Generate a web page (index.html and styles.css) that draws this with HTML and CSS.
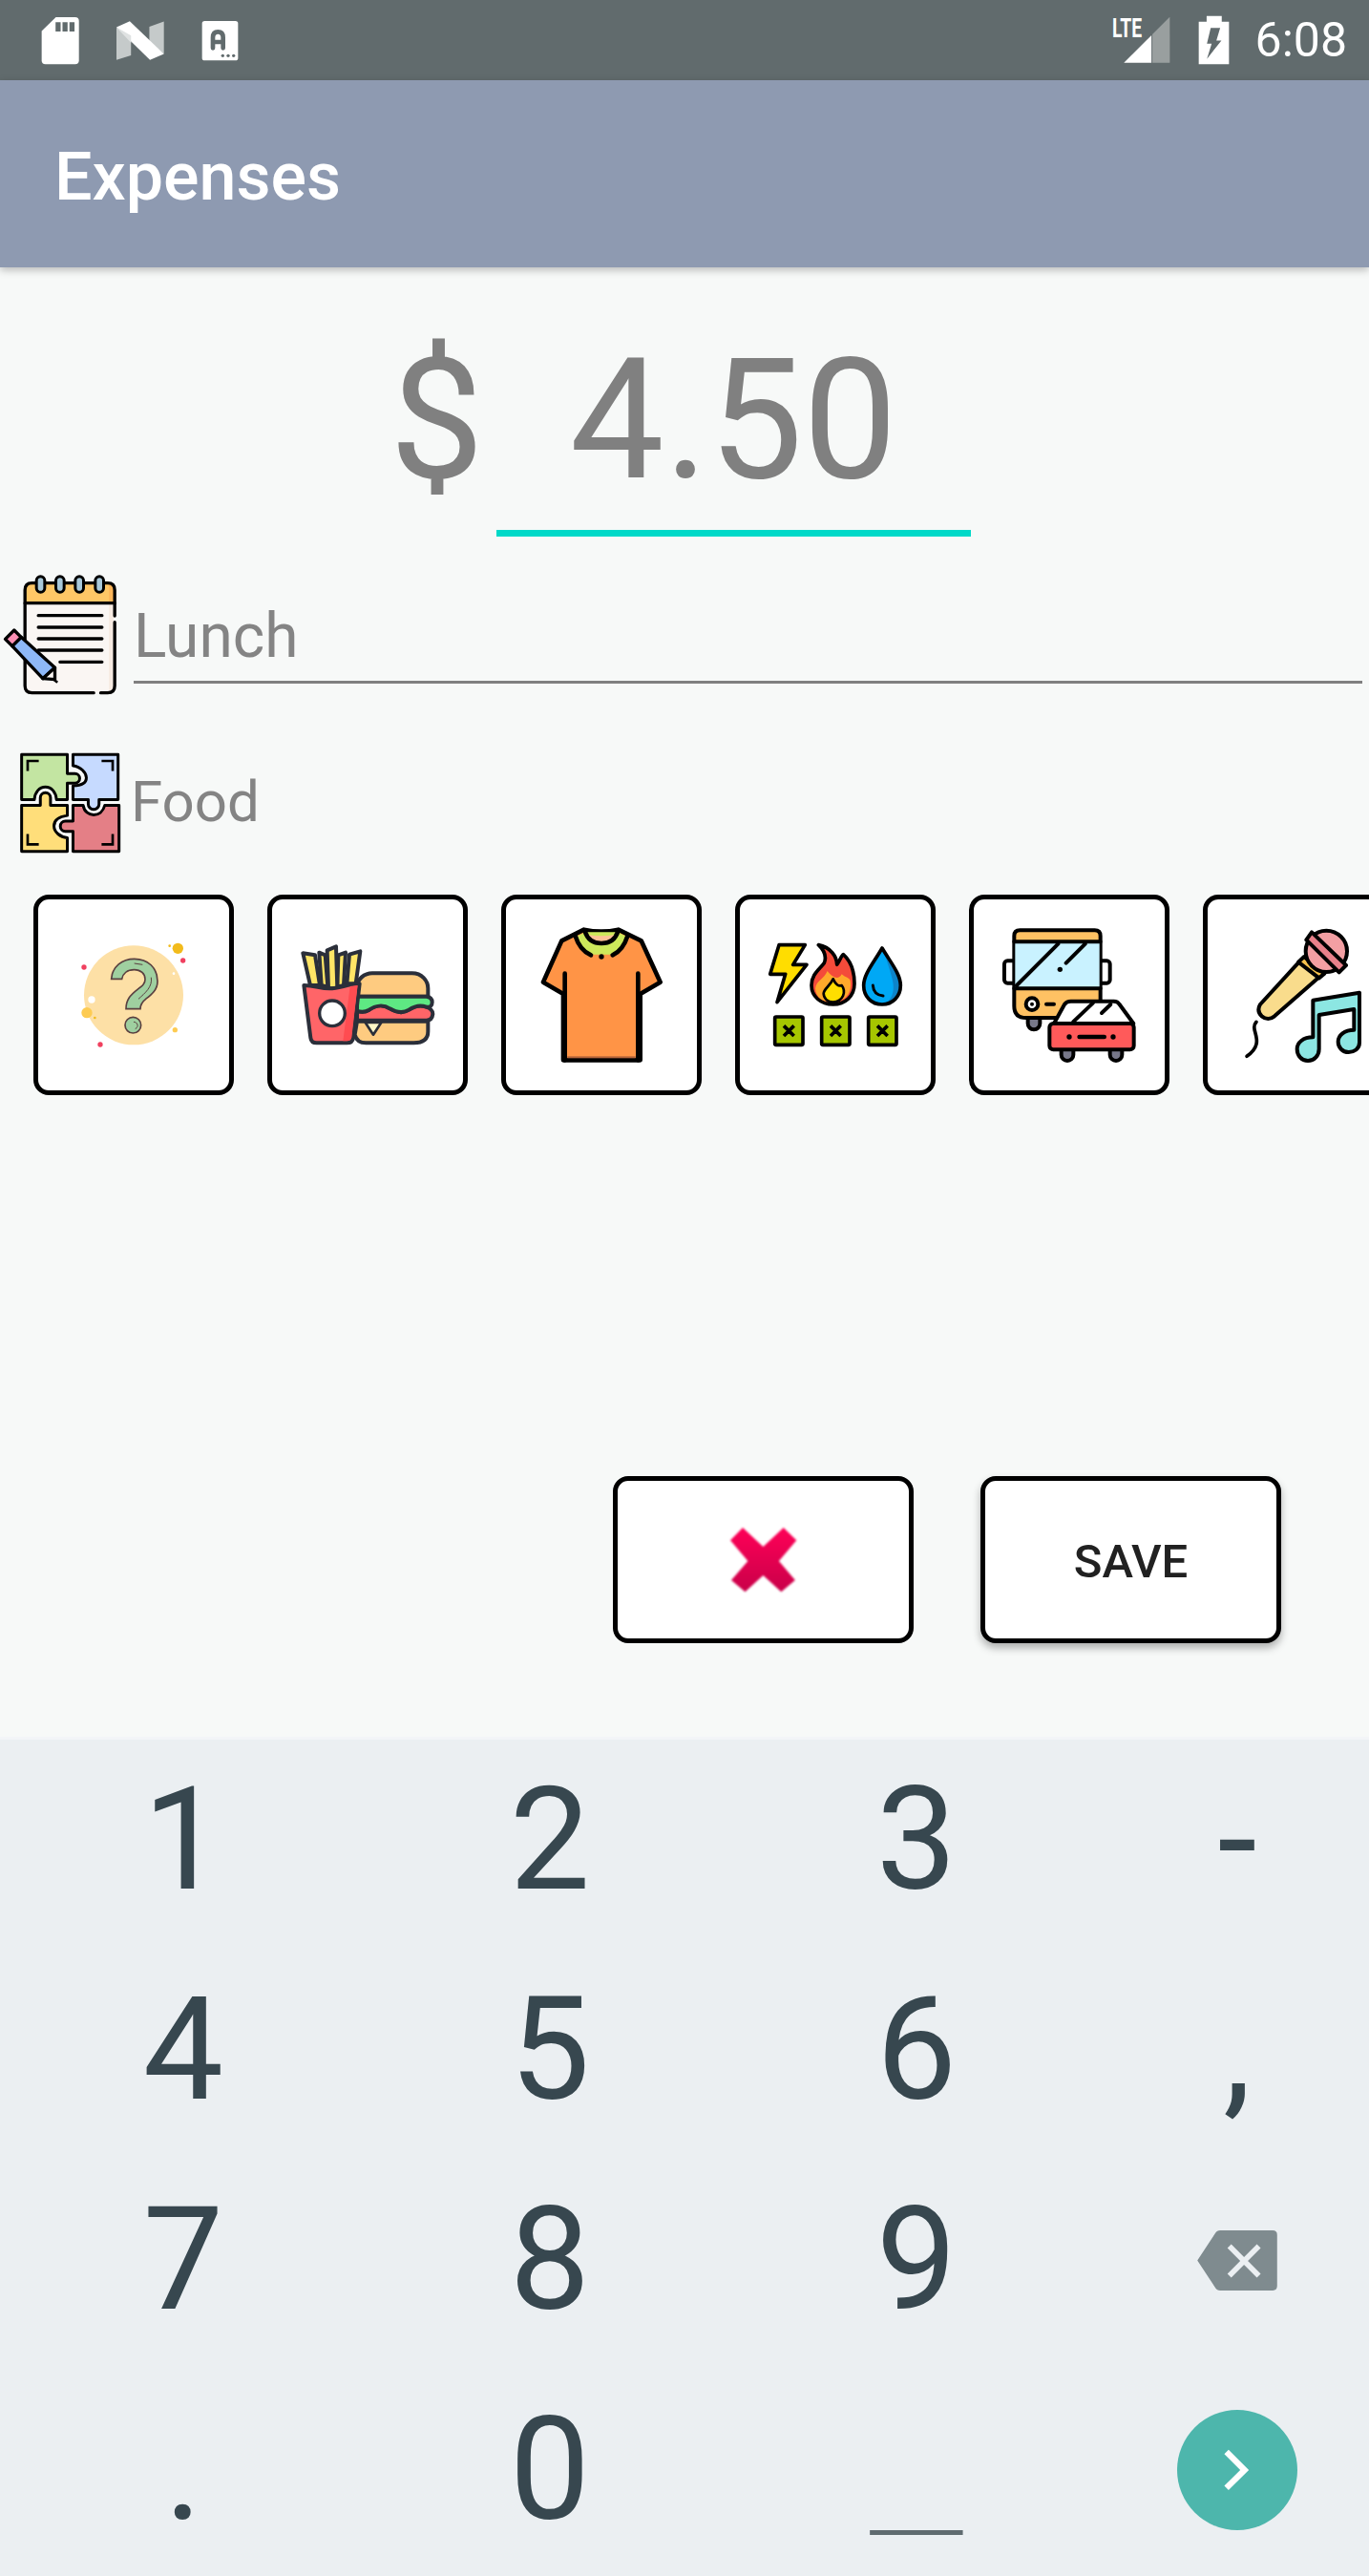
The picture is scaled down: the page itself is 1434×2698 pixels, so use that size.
FILE: index.html
```html
<!DOCTYPE html>
<html>
<head>
    <title>Expenses</title>
    <link rel="stylesheet" href="styles.css">
</head>
<body>
<div class="page">
    <div class="status-bar">
        <svg class="ic-sd" viewBox="125 45 130 160"><path fill="#fff" d="M175 51 H236 Q248 51 248 63 V188 Q248 200 236 200 H142 Q130 200 130 188 V95 Z"/><path fill="#616b6d" d="M174 67 h16 v29 h-16z M196 67 h16 v29 h-16z M218 67 h16 v29 h-16z"/></svg>
        <svg class="ic-n" viewBox="360 58 160 135"><path fill="#c5caca" d="M366 85 L412 110 V172 L366 187 Z M470 82 L516 65 V168 L470 130 Z"/><path fill="#fff" d="M366 83 L408 64 L516 168 L472 187 Z"/><path fill="#dfe2e2" d="M366 83 L412 132 V110 Z"/></svg>
        <svg class="ic-a" viewBox="632 58 123 135"><rect x="637" y="64" width="113" height="124" rx="8" fill="#fff"/><path fill="none" stroke="#616b6d" stroke-width="14" stroke-linecap="round" stroke-linejoin="round" d="M671 149 V116 Q671 98 687 98 Q703 98 703 116 V149 M671 130 H703"/><circle cx="702" cy="173" r="5" fill="#616b6d"/><circle cx="719" cy="173" r="5" fill="#616b6d"/><circle cx="736" cy="173" r="5" fill="#616b6d"/></svg>
        <div class="status-right">
            <svg class="ic-signal" viewBox="195 35 190 165"><text x="198" y="115" textLength="94" lengthAdjust="spacingAndGlyphs" class="lte-text">LTE</text><path fill="#fff" d="M235 197 L322 110 V197 Z"/><path fill="#999f9f" d="M325 107 L380 52 V197 H325 Z"/></svg>
            <svg class="ic-battery" viewBox="470 45 100 157"><path fill="#fff" d="M497 47 H545 V65 H568 V200 H472 V65 H497 Z"/><path fill="#616b6d" d="M510 85 H540 L528 125 H544 L498 183 L513 135 H498 Z"/></svg>
            <span class="clock">6:08</span>
        </div>
    </div>
    <div class="app-bar">Expenses</div>

    <div class="content">
        <div class="amount-row">
            <span class="currency">$</span>
            <div class="amount-field">4.50</div>
        </div>

        <div class="note-row">
            <svg class="ic-note" viewBox="0 60 380 390">
                <rect x="78" y="92" width="282" height="345" rx="22" fill="#faf6f3"/>
                <rect x="342" y="156" width="14" height="274" fill="#f7ebe2"/>
                <path fill="#ffc766" d="M78 155 V114 Q78 92 100 92 H338 Q360 92 360 114 V155 Z"/>
                <path fill="#fdb65a" d="M342 92 H338 Q360 92 360 114 V155 H342 Z"/>
                <g fill="none" stroke="#000" stroke-width="10" stroke-linecap="round" stroke-linejoin="round">
                    <path d="M360 215 V415 Q360 437 338 437 H316 M294 437 H100 Q78 437 78 415 V114 Q78 92 100 92 H338 Q360 92 360 114 V195"/>
                    <path d="M78 155 H360"/>
                    <path d="M120 194 H320 M120 231 H320 M120 267 H320 M120 303 H320 M188 340 H320"/>
                </g>
                <g fill="#a9c9da" stroke="#000" stroke-width="9">
                    <rect x="114" y="71" width="26" height="50" rx="13"/>
                    <rect x="175" y="71" width="26" height="50" rx="13"/>
                    <rect x="236" y="71" width="26" height="50" rx="13"/>
                    <rect x="299" y="71" width="26" height="50" rx="13"/>
                </g>
                <g stroke="#000" stroke-width="10" stroke-linejoin="round">
                    <path fill="#8eb8f7" d="M38 290 L66 262 L172 358 L134 392 Z"/>
                    <path fill="#fb8fb4" d="M16 268 L44 240 L66 262 L38 290 Z"/>
                    <path fill="#faf6f3" d="M172 358 L172 395 L134 392 Z"/>
                </g>
                <path stroke="#000" stroke-width="8" d="M165 392 L180 404"/>
            </svg>
            <div class="note-field">Lunch</div>
        </div>

        <div class="category-row">
            <svg class="ic-puzzle" viewBox="60 620 325 325">
                <g stroke="#000" stroke-width="9" stroke-linejoin="round">
                    <path fill="#c3e5a2" d="M68 630 H212 V690 H236 a15 15 0 0 1 0 30 H212 V772 H178 C176 748 162 732 143 732 C124 732 110 748 108 772 H68 Z"/>
                    <path fill="#c6daff" d="M230 630 H372 V772 H312 V786 a16 16 0 0 1 -34 0 V772 H230 V728 C255 728 272 720 272 703 C272 688 255 668 230 665 Z"/>
                    <path fill="#ffde7a" d="M68 790 H127 V766 a16 16 0 0 1 32 0 V790 H212 V822 C190 825 170 835 170 855 C170 875 190 890 212 892 V935 H68 Z"/>
                    <path fill="#e47f86" d="M230 790 H262 C265 810 280 820 295 820 C310 820 325 810 330 790 H375 V935 H230 V872 H206 a16 16 0 0 1 0 -32 H230 Z"/>
                </g>
                <g fill="none" stroke="#000" stroke-width="8">
                    <path d="M87 682 V650 H122 M320 650 H355 V682 M87 880 V913 H122 M355 880 V913 H320"/>
                </g>
            </svg>
            <div class="category-name">Food</div>
        </div>

        <div class="tiles">
            <div class="tile">
                <svg viewBox="60 65 600 600">
                    <circle cx="360" cy="366" r="156" fill="#fde0a6"/>
                    <g fill="#9fd0a0" stroke="#5a4040" stroke-width="5">
                        <path d="M290 315 C292 275 325 252 362 252 C405 252 435 280 435 322 C435 350 415 365 398 378 C385 388 381 395 381 409 L336 409 C336 380 350 365 372 348 C388 336 396 330 396 316 C396 298 382 286 362 286 C340 286 326 298 323 315 Z"/>
                        <circle cx="358" cy="460" r="25"/>
                    </g>
                    <path fill="none" stroke="#5a4040" stroke-width="3" d="M362 266 L388 270 M415 310 C420 340 395 360 375 378 M360 450 C372 450 378 465 365 472"/>
                    <circle cx="499" cy="219" r="17" fill="#f2bb1c"/><circle cx="473" cy="211" r="4" fill="#f2bb1c"/>
                    <circle cx="515" cy="257" r="8" fill="#f0405f"/><circle cx="204" cy="278" r="8" fill="#f0405f"/>
                    <circle cx="228" cy="380" r="11" fill="#fff"/><circle cx="486" cy="298" r="4" fill="#fff"/>
                    <circle cx="213" cy="421" r="17" fill="#fdcb52"/><circle cx="238" cy="437" r="4" fill="#f2bb1c"/>
                    <circle cx="490" cy="475" r="8" fill="#fdcb52"/><circle cx="255" cy="521" r="8" fill="#f0405f"/>
                </svg>
            </div>
            <div class="tile">
                <svg viewBox="795 65 600 600">
                    <g stroke="#2b2f3a" stroke-width="12" stroke-linejoin="round">
                        <path fill="#fecb80" d="M1062 370 V340 C1062 315 1085 297 1110 297 H1235 C1265 297 1285 320 1285 345 V370 Z"/>
                        <path fill="#fecb80" d="M1062 448 H1285 V480 Q1285 516 1240 516 H1090 Q1062 516 1055 490 Z"/>
                        <path fill="#fff8c8" stroke-width="8" d="M1088 452 H1138 L1113 490 Z"/>
                        <path fill="#ff6568" d="M1062 415 C1075 420 1090 418 1100 412 C1120 398 1145 395 1165 408 C1185 420 1205 425 1225 412 C1245 398 1260 395 1280 403 Q1300 410 1300 425 Q1298 445 1280 445 H1062 Z"/>
                        <path fill="#5ee883" d="M1062 370 H1280 Q1298 372 1298 388 Q1298 405 1280 403 C1260 395 1245 398 1225 412 C1205 425 1185 420 1165 408 C1145 395 1120 398 1100 412 C1090 418 1075 420 1062 415 Z"/>
                        <g fill="#ffe566">
                            <path d="M892 234 L930 240 L945 335 L915 335 Z"/>
                            <path d="M943 232 L962 240 L970 340 L950 335 Z"/>
                            <path d="M1003 240 L1026 232 L1020 335 L1000 340 Z"/>
                            <path d="M1038 238 L1072 228 L1058 330 L1030 330 Z"/>
                            <path d="M968 225 L996 213 L1000 345 L972 345 Z"/>
                        </g>
                        <path fill="#ff6568" d="M895 335 C930 335 945 345 975 345 C1010 345 1030 330 1070 330 L1050 500 Q1048 516 1030 516 H935 Q918 516 916 500 Z"/>
                    </g>
                    <path fill="#ff4c51" d="M1040 338 L1064 335 L1045 498 Q1043 510 1030 510 H1018 Z"/>
                    <circle cx="984" cy="423" r="40" fill="#fff" stroke="#2b2f3a" stroke-width="10"/>
                </svg>
            </div>
            <div class="tile">
                <svg viewBox="90 65 600 600">
                    <path fill="#ff9446" stroke="#000" stroke-width="14" stroke-linejoin="round" d="M335 160 Q390 172 443 160 L515 195 L575 325 L512 362 V570 H270 V362 L207 325 L265 195 Z"/>
                    <path fill="#cde95b" d="M315 180 L340 168 L440 168 L465 180 Q455 222 425 238 L355 238 Q325 222 315 180 Z"/>
                    <path fill="#ffc296" d="M344 175 Q390 185 436 175 Q430 205 390 207 Q350 205 344 175 Z"/>
                    <rect x="283" y="558" width="214" height="6" fill="#b4633a"/>
                    <g fill="none" stroke="#000" stroke-width="14" stroke-linecap="round">
                        <path d="M308 180 Q322 225 357 240 M472 180 Q458 225 425 240"/>
                        <path d="M338 165 Q350 203 390 203 Q430 203 442 165"/>
                        <path d="M275 298 V570 M505 298 V570"/>
                    </g>
                    <circle cx="390" cy="245" r="8" fill="#000"/>
                </svg>
            </div>
            <div class="tile">
                <svg viewBox="825 65 600 600">
                    <g stroke="#000" stroke-width="11" stroke-linejoin="round">
                        <path fill="#ffdd00" d="M948 208 H1030 L992 270 H1035 L942 388 L968 300 H920 Z"/>
                        <path fill="#f44b3a" d="M1072 208 C1110 215 1130 245 1130 270 C1140 255 1145 240 1150 238 C1175 260 1185 290 1185 330 C1185 370 1155 395 1118 395 C1080 395 1050 370 1050 335 C1050 300 1075 285 1090 265 C1098 245 1090 225 1072 208 Z"/>
                    </g>
                    <path fill="#ffa92b" d="M1062 345 C1065 320 1090 315 1100 290 C1115 310 1135 320 1145 300 C1155 310 1168 310 1172 320 C1178 355 1160 385 1118 388 C1085 388 1065 375 1062 345 Z"/>
                    <path fill="#ffde00" stroke="#000" stroke-width="8" stroke-linejoin="round" d="M1088 360 C1090 345 1110 335 1118 315 C1125 330 1135 340 1145 335 C1160 355 1150 385 1118 388 C1100 388 1088 375 1088 360 Z"/>
                    <path fill="#00a8f5" d="M1272 218 C1300 265 1330 300 1330 335 C1330 370 1305 395 1272 395 C1238 395 1214 370 1214 335 C1214 300 1245 265 1272 218 Z"/>
                    <path fill="#0d84c9" d="M1272 218 C1300 265 1330 300 1330 335 C1330 370 1305 395 1272 395 C1305 385 1312 350 1305 320 C1298 290 1285 250 1272 218 Z"/>
                    <path fill="none" stroke="#000" stroke-width="11" stroke-linejoin="round" d="M1272 218 C1300 265 1330 300 1330 335 C1330 370 1305 395 1272 395 C1238 395 1214 370 1214 335 C1214 300 1245 265 1272 218 Z"/>
                    <path fill="none" stroke="#000" stroke-width="9" stroke-linecap="round" d="M1243 335 Q1245 365 1275 368"/>
                    <g fill="#a6c600" stroke="#000" stroke-width="11" stroke-linejoin="round">
                        <rect x="935" y="434" width="88" height="88" rx="4"/>
                        <rect x="1082" y="434" width="88" height="88" rx="4"/>
                        <rect x="1229" y="434" width="88" height="88" rx="4"/>
                    </g>
                    <path fill="none" stroke="#000" stroke-width="11" d="M963 462 L995 494 M995 462 L963 494 M1110 462 L1142 494 M1142 462 L1110 494 M1257 462 L1289 494 M1289 462 L1257 494"/>
                </svg>
            </div>
            <div class="tile">
                <svg viewBox="120 65 600 600">
                    <g stroke="#000" stroke-width="12" stroke-linejoin="round" stroke-linecap="round">
                        <path fill="#77788a" d="M290 436 V455 a19 19 0 0 0 38 0 V436 Z"/>
                        <rect x="216" y="258" width="40" height="70" rx="10" fill="#fff"/>
                        <rect x="508" y="258" width="40" height="70" rx="10" fill="#fff"/>
                        <path fill="#fec163" d="M247 180 Q247 162 265 162 H500 Q518 162 518 180 V400 Q518 437 480 437 H285 Q247 437 247 400 Z"/>
                        <rect x="250" y="199" width="265" height="146" fill="#c9f2ff" stroke="none"/>
                        <path fill="none" d="M247 198 H518 M247 345 H518 M255 335 L385 205 M410 265 L470 205"/>
                        <path fill="none" d="M348 394 H372"/>
                        <circle cx="303" cy="394" r="19" fill="#fff"/>
                        <path fill="#77788a" d="M395 535 V553 a19 19 0 0 0 38 0 V535 Z M548 535 V553 a19 19 0 0 0 38 0 V535 Z"/>
                        <path fill="#fff" d="M372 455 L405 395 Q412 385 425 385 H560 Q572 385 578 395 L622 455 Z"/>
                        <path fill="none" d="M432 450 L495 390 M522 422 L550 395"/>
                        <rect x="358" y="455" width="265" height="82" rx="12" fill="#ff5a5a"/>
                        <path fill="none" stroke-width="14" d="M452 497 H530"/>
                    </g>
                    <circle cx="391" cy="285" r="8" fill="#000"/>
                    <circle cx="303" cy="394" r="6" fill="#000"/>
                    <circle cx="420" cy="497" r="8" fill="#000"/>
                    <circle cx="558" cy="497" r="8" fill="#000"/>
                </svg>
            </div>
            <div class="tile">
                <svg viewBox="855 65 600 600">
                    <g stroke="#000" stroke-width="12" stroke-linejoin="round" stroke-linecap="round">
                        <path fill="#f9dc8c" d="M1142 262 L1020 395 Q1008 415 1025 432 Q1045 448 1065 432 L1210 305 Z"/>
                        <path fill="#f6c24d" d="M1140 262 L1158 245 L1222 298 L1205 312 Z"/>
                        <circle cx="1228" cy="228" r="65" fill="#f39fa3"/>
                        <path fill="#e8808a" d="M1182 168 L1290 272 L1268 294 L1165 192 Z"/>
                        <path fill="none" stroke-width="11" d="M1008 450 C990 470 1015 490 1008 520 C1003 540 990 550 978 558"/>
                        <path fill="#8ce6e2" d="M1186 382 L1332 358 V515 C1332 535 1315 545 1298 545 C1278 545 1265 530 1265 512 C1265 492 1285 475 1315 475 V410 L1205 428 V535 C1205 555 1190 572 1170 572 C1150 572 1136 555 1136 535 C1136 515 1155 498 1186 498 Z"/>
                    </g>
                </svg>
            </div>
        </div>

        <div class="actions">
            <div class="btn">
                <svg class="ic-cancel" viewBox="0 0 70 68">
                    <defs><linearGradient id="xgrad" x1="0" y1="0" x2="0" y2="1"><stop offset="0" stop-color="#ff0057"/><stop offset="1" stop-color="#c90049"/></linearGradient></defs>
                    <path fill="url(#xgrad)" d="M13 0 L34.4 20 L55.7 0 L69.3 13.3 L50.9 35 L67.9 55 L53.3 67.3 L34.4 50 L15.5 67.3 L1 55 L18.4 35 L0 13.3 Z"/>
                </svg>
            </div>
            <div class="btn btn-raised">SAVE</div>
        </div>
    </div>

    <div class="keyboard">
        <div class="key">1</div><div class="key">2</div><div class="key">3</div><div class="key key-side">-</div>
        <div class="key">4</div><div class="key">5</div><div class="key">6</div><div class="key key-side">,</div>
        <div class="key">7</div><div class="key">8</div><div class="key">9</div>
        <div class="key key-side">
            <svg class="ic-back" viewBox="222 162 252 190">
                <path fill="#7f8b8f" d="M222 257 L278 172 Q284 162 294 162 H460 Q474 162 474 176 V338 Q474 352 460 352 H294 Q284 352 278 342 Z"/>
                <path stroke="#ebeff2" stroke-width="17" d="M323 212 L416 305 M416 212 L323 305"/>
            </svg>
        </div>
        <div class="key">.</div><div class="key">0</div><div class="key key-under"><span>_</span></div>
        <div class="key key-side">
            <svg class="ic-enter" viewBox="160 730 378 378">
                <circle cx="349" cy="919" r="189" fill="#4db6ac"/>
                <path fill="none" stroke="#fff" stroke-width="19" d="M315 862 L372 919 L315 975"/>
            </svg>
        </div>
    </div>
</div>
</body>
</html>
```
FILE: styles.css
```css
* {
    box-sizing: border-box;
}

html, body {
    margin: 0;
    padding: 0;
    height: 100%;
    overflow: hidden;
}

body {
    font-family: Roboto, "Liberation Sans", sans-serif;
    background-color: #f7f9f8;
}

svg {
    display: block;
}

.page {
    display: flex;
    flex-direction: column;
    width: 1434px;
    height: 2698px;
    overflow: hidden;
}

.status-bar {
    display: flex;
    align-items: center;
    flex: none;
    height: 84px;
    padding-left: 42px;
    padding-right: 23px;
    background-color: #616b6d;
}

.ic-sd {
    width: 43px;
    height: 53px;
}

.ic-n {
    width: 53px;
    height: 45px;
    margin-left: 35px;
}

.ic-a {
    width: 41px;
    height: 45px;
    margin-left: 37px;
}

.status-right {
    display: flex;
    align-items: center;
    margin-left: auto;
}

.ic-signal {
    width: 63px;
    height: 55px;
    margin-bottom: 5px;
}

.lte-text {
    font-family: Roboto, sans-serif;
    font-size: 84px;
    font-weight: 700;
    fill: #fff;
}

.ic-battery {
    width: 33px;
    height: 52px;
    margin-left: 28px;
}

.clock {
    margin-left: 27px;
    font-size: 50px;
    color: #fff;
}

.app-bar {
    flex: none;
    position: relative;
    z-index: 1;
    height: 196px;
    padding-top: 6px;
    padding-left: 57px;
    font-size: 70px;
    font-weight: 500;
    line-height: 190px;
    color: #fff;
    background-color: #8e9ab1;
    box-shadow: 0 3px 8px rgba(0, 0, 0, 0.25);
}

.content {
    flex: 1;
    min-height: 0;
}

.amount-row {
    display: flex;
    padding-top: 57px;
    padding-left: 408px;
    font-size: 176px;
    line-height: 206px;
    color: #808080;
}

.amount-field {
    width: 497px;
    margin-left: 13px;
    padding-bottom: 12px;
    text-align: center;
    border-bottom: 7px solid #00d9c8;
}

.note-row {
    display: flex;
    margin-top: 38px;
    padding-right: 7px;
}

.ic-note {
    flex: none;
    width: 127px;
    height: 130px;
}

.note-field {
    flex: 1;
    align-self: flex-start;
    margin-top: 29px;
    margin-left: 13px;
    padding-bottom: 9px;
    font-size: 64px;
    line-height: 75px;
    color: #848484;
    border-bottom: 3px solid #808080;
}

.category-row {
    display: flex;
    margin-top: 57px;
    padding-left: 20px;
}

.ic-puzzle {
    flex: none;
    width: 108px;
    height: 108px;
}

.category-name {
    margin-top: 18px;
    margin-left: 9px;
    font-size: 60px;
    line-height: 70px;
    color: #848484;
}

.tiles {
    display: flex;
    gap: 35px;
    margin-top: 42px;
    padding-left: 35px;
}

.tile {
    flex: none;
    width: 210px;
    height: 210px;
    background-color: #fff;
    border: 5px solid #000;
    border-radius: 16px;
}

.tile svg {
    width: 200px;
    height: 200px;
}

.actions {
    display: flex;
    justify-content: flex-end;
    gap: 70px;
    margin-top: 399px;
    padding-right: 92px;
}

.btn {
    display: flex;
    align-items: center;
    justify-content: center;
    width: 315px;
    height: 175px;
    font-size: 49px;
    font-weight: 500;
    color: #212121;
    background-color: #fff;
    border: 5px solid #000;
    border-radius: 16px;
}

.btn-raised {
    padding-top: 3px;
    box-shadow: 0 5px 8px rgba(0, 0, 0, 0.3);
}

.ic-cancel {
    width: 70px;
    height: 68px;
    filter: blur(1px);
}

.keyboard {
    flex: none;
    display: grid;
    grid-template-columns: 384px 384px 384px 1fr;
    grid-template-rows: 220px 220px 220px 216px;
    height: 879px;
    font-size: 150px;
    color: #37474f;
    background-color: #ebeff2;
    border-top: 3px solid #f3f5f8;
}

.key {
    display: flex;
    align-items: center;
    justify-content: center;
    height: 210px;
    line-height: 176px;
}

.key-side {
    padding-left: 6px;
}

.key-under {
    color: #5f6b70;
}

.key-under span {
    transform: translateY(40px) scale(1.45, 0.45);
}

.ic-back {
    width: 84px;
    height: 63px;
}

.ic-enter {
    width: 126px;
    height: 126px;
}
```
